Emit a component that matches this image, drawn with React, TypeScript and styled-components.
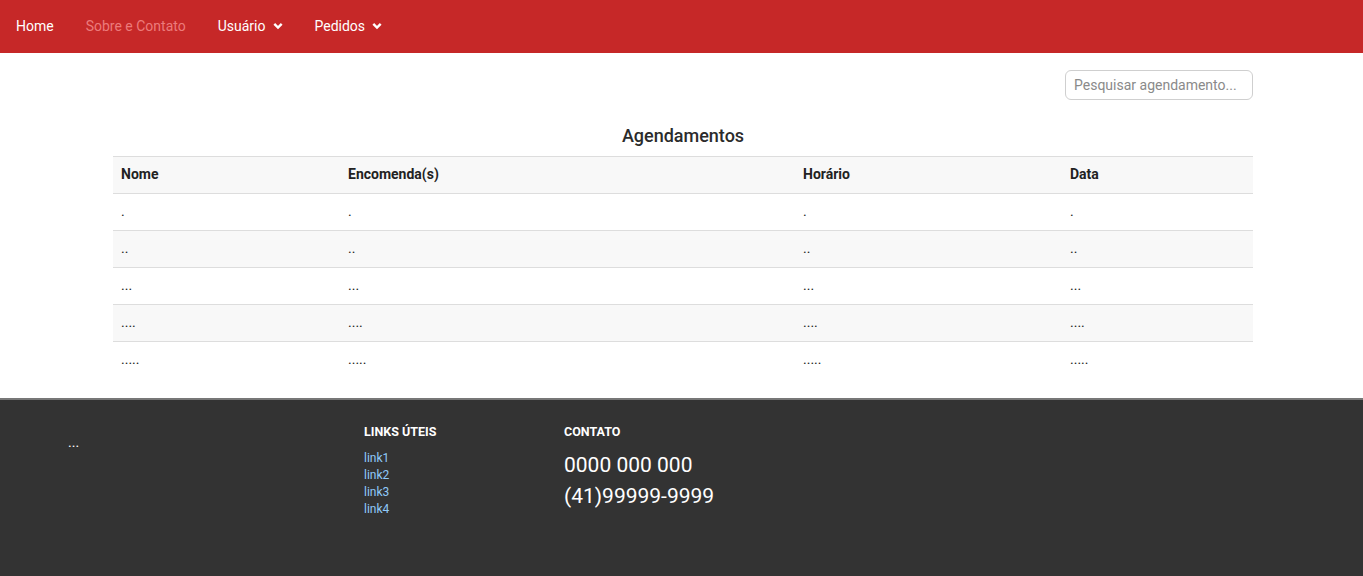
import React from "react";
import styled, { createGlobalStyle } from "styled-components";

const Global = createGlobalStyle`
  html, body { margin: 0; padding: 0; background: #fff; }
  body { font-family: Roboto, "Liberation Sans", Arial, sans-serif; color: #212529; }
  * { box-sizing: border-box; }
`;

const Navbar = styled.nav`
  height: 53px;
  background: #c62828;
  display: flex;
  align-items: center;
  padding-bottom: 1px;
`;

const NavItem = styled.a<{ $muted?: boolean }>`
  display: flex;
  align-items: center;
  gap: 7px;
  padding: 0 16px;
  font-size: 14px;
  color: ${(p) => (p.$muted ? "#ec7b7b" : "#fff")};
  text-decoration: none;
  cursor: pointer;
`;

const Chevron = () => (
  <svg width="10" height="8" viewBox="0 0 10 8">
    <path d="M1.3 1.8 L5 5.5 L8.7 1.8" stroke="#fff" strokeWidth="2.4" fill="none" />
  </svg>
);

const Main = styled.main`
  margin: 0 110px 0 113px;
  padding: 17px 0 20px;
`;

const SearchRow = styled.div`
  display: flex;
  justify-content: flex-end;
`;

const Search = styled.input`
  width: 188px;
  height: 30px;
  border: 1px solid #cfcfcf;
  border-radius: 6px;
  padding: 0 8px;
  font-family: inherit;
  font-size: 14px;
  color: #333;
  outline: none;
  &::placeholder { color: #8a8a8a; }
`;

const Title = styled.h2`
  margin: 25px 0 0;
  text-align: center;
  font-size: 18px;
  font-weight: 500;
  line-height: 22px;
  color: #2b2b2b;
  padding-bottom: 9px;
`;

const Table = styled.table`
  width: 100%;
  border-collapse: collapse;
  font-size: 14px;
`;

const Th = styled.th<{ $w?: string }>`
  text-align: left;
  font-weight: 700;
  padding: 7px 8px 9px;
  line-height: 20px;
  background: #f8f8f8;
  border-top: 1px solid #dddddd;
  border-bottom: 1px solid #dddddd;
  width: ${(p) => p.$w || "auto"};
  color: #222;
`;

const Tr = styled.tr<{ $alt?: boolean }>`
  background: ${(p) => (p.$alt ? "#f8f8f8" : "#fff")};
`;

const Td = styled.td<{ $last?: boolean }>`
  padding: 7px 8px 9px;
  line-height: 20px;
  border-bottom: ${(p) => (p.$last ? "none" : "1px solid #dddddd")};
  color: #222;
`;

const Footer = styled.footer`
  border-top: 2px solid #777;
  background: #333;
  height: 178px;
  display: grid;
  grid-template-columns: 296px 200px 1fr;
  padding: 24px 0 0 68px;
  color: #fff;
`;

const Dots = styled.div`
  font-size: 14px;
  margin-top: 10px;
`;

const Col = styled.div`
  display: flex;
  flex-direction: column;
`;

const FooterHead = styled.h5`
  margin: 0 0 10px;
  font-size: 12.5px;
  font-weight: 700;
  line-height: 16px;
  color: #fff;
`;

const FLink = styled.a`
  font-size: 12px;
  line-height: 17px;
  color: #90caf9;
  text-decoration: none;
`;

const Phone = styled.div`
  font-size: 21px;
  line-height: 31px;
  color: #fff;
`;

const rows = [".", "..", "...", "....", "....."];

export default function App() {
  return (
    <>
      <Global />
      <Navbar>
        <NavItem>Home</NavItem>
        <NavItem $muted>Sobre e Contato</NavItem>
        <NavItem>
          Usuário <Chevron />
        </NavItem>
        <NavItem>
          Pedidos <Chevron />
        </NavItem>
      </Navbar>
      <Main>
        <SearchRow>
          <Search placeholder="Pesquisar agendamento..." />
        </SearchRow>
        <Title>Agendamentos</Title>
        <Table>
          <thead>
            <tr>
              <Th $w="227px">Nome</Th>
              <Th $w="455px">Encomenda(s)</Th>
              <Th $w="267px">Horário</Th>
              <Th>Data</Th>
            </tr>
          </thead>
          <tbody>
            {rows.map((r, i) => (
              <Tr key={r} $alt={i % 2 === 1}>
                <Td $last={i === rows.length - 1}>{r}</Td>
                <Td $last={i === rows.length - 1}>{r}</Td>
                <Td $last={i === rows.length - 1}>{r}</Td>
                <Td $last={i === rows.length - 1}>{r}</Td>
              </Tr>
            ))}
          </tbody>
        </Table>
      </Main>
      <Footer>
        <Dots>...</Dots>
        <Col>
          <FooterHead>LINKS ÚTEIS</FooterHead>
          <FLink>link1</FLink>
          <FLink>link2</FLink>
          <FLink>link3</FLink>
          <FLink>link4</FLink>
        </Col>
        <Col>
          <FooterHead>CONTATO</FooterHead>
          <Phone>0000 000 000</Phone>
          <Phone>(41)99999-9999</Phone>
        </Col>
      </Footer>
    </>
  );
}
